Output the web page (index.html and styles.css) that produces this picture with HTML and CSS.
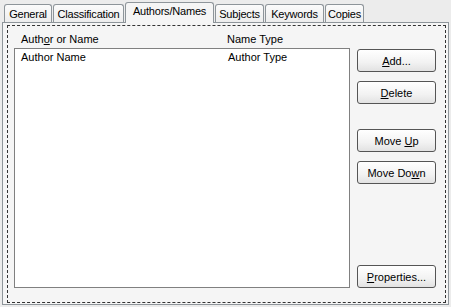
FILE: index.html
```html
<!DOCTYPE html>
<html>
<head>
<meta charset="utf-8">
<link rel="stylesheet" href="styles.css">
</head>
<body>
<div class="dialog">
  <div class="tabs">
    <div class="tab t-general">General</div>
    <div class="tab t-class">Classification</div>
    <div class="tab t-authors active">Authors/Names</div>
    <div class="tab t-subjects">Subjects</div>
    <div class="tab t-keywords">Keywords</div>
    <div class="tab t-copies">Copies</div>
  </div>
  <div class="panel">
    <div class="focus">
      <div class="list-col">
        <div class="list-head">
          <span class="col1">Auth<u>o</u>r or Name</span>
          <span class="col2">Name Type</span>
        </div>
        <div class="listbox">
          <div class="row">
            <span class="col1">Author Name</span>
            <span class="col2 item2">Author Type</span>
          </div>
        </div>
      </div>
      <div class="buttons">
        <button class="btn"><u>A</u>dd...</button>
        <button class="btn"><u>D</u>elete</button>
        <button class="btn gap-big">Move <u>U</u>p</button>
        <button class="btn">Move Do<u>w</u>n</button>
        <button class="btn bottom"><u>P</u>roperties...</button>
      </div>
    </div>
  </div>
</div>
</body>
</html>
```

FILE: styles.css
```css
html, body {
  margin: 0;
  padding: 0;
  background: #ececec;
}
body {
  font-family: "Liberation Sans", Arial, sans-serif;
  font-size: 11px;
  color: #000;
}
.dialog {
  width: 451px;
  height: 307px;
}
.tabs {
  display: flex;
  align-items: flex-end;
  height: 22px;
  padding-left: 4px;
  gap: 1px;
  position: relative;
  z-index: 2;
}
.tab {
  box-sizing: border-box;
  height: 18px;
  border: 1px solid #8e959a;
  border-bottom: none;
  border-radius: 3px 3px 0 0;
  background: linear-gradient(#fbfbfb, #ededed);
  text-align: center;
  line-height: 18px;
  letter-spacing: -0.2px;
  white-space: nowrap;
}
.tab.active {
  height: 21px;
  margin-bottom: -1px;
  background: #f5f5f5;
  line-height: 17px;
  padding-bottom: 3px;
}
.t-general { width: 48px; }
.t-class { width: 71px; }
.t-authors { width: 89px; }
.t-subjects { width: 49px; }
.t-keywords { width: 59px; }
.t-copies { width: 39px; }

.panel {
  box-sizing: border-box;
  margin-left: 2px;
  width: 447px;
  height: 283px;
  border: 1px solid #8e959a;
  background: #f5f5f5;
  padding: 2px 2px 1px 4px;
  position: relative;
  z-index: 1;
}
.focus {
  box-sizing: border-box;
  height: 278px;
  border: 1px dashed #333;
  display: flex;
  padding: 0 0 0 6px;
}
.list-col {
  width: 336px;
  display: flex;
  flex-direction: column;
}
.list-head {
  display: flex;
  height: 22px;
  box-sizing: border-box;
  padding: 7px 0 0 7px;
  line-height: 13px;
}
.col1 {
  width: 206px;
}
.listbox {
  box-sizing: border-box;
  height: 240px;
  background: #fff;
  border: 1px solid #808080;
}
.row {
  display: flex;
  padding: 2px 0 0 6px;
  line-height: 13px;
}
.item2 {
  margin-left: 1px;
}
.buttons {
  display: flex;
  flex-direction: column;
  margin-left: 7px;
  padding-top: 23px;
  padding-bottom: 14px;
  gap: 9px;
}
.btn {
  box-sizing: border-box;
  width: 79px;
  height: 23px;
  font-family: "Liberation Sans", Arial, sans-serif;
  font-size: 11px;
  color: #000;
  border: 1px solid #555;
  border-radius: 3px;
  background: linear-gradient(#ffffff, #f2f2f2 60%, #e2e2e2);
  padding: 0;
  text-align: center;
}
.gap-big {
  margin-top: 16px;
}
.bottom {
  margin-top: auto;
}
```
